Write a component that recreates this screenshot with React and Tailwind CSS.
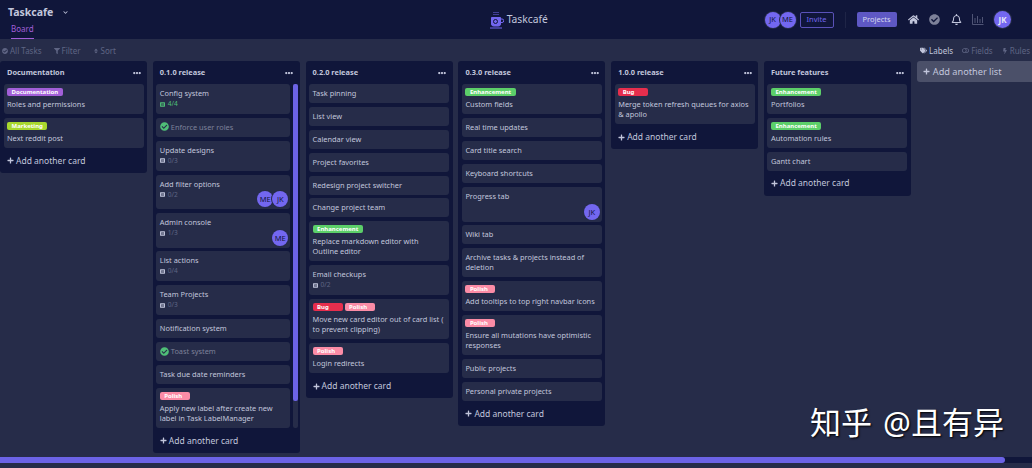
import React from 'react';
import { FaRegBell, FaBolt, FaCheckCircle, FaChevronDown, FaEllipsisH, FaFilter, FaHome, FaPlus, FaSort, FaTags, FaToggleOff, FaListAlt } from 'react-icons/fa';

const LABEL = {
  Documentation: 'bg-[#a25fd8]',
  Marketing: 'bg-[#a8d82e]',
  Enhancement: 'bg-[#5ccf69]',
  Bug: 'bg-[#e62e4d]',
  Polish: 'bg-[#fb8ca6]',
};

const LISTS = [
  {
    name: 'Documentation', cards: [
      { labels: ['Documentation'], title: 'Roles and permissions' },
      { labels: ['Marketing'], title: 'Next reddit post' },
    ],
  },
  {
    name: '0.1.0 release', scroll: true, cards: [
      { title: 'Config system', tasks: '4/4', done: true },
      { title: 'Enforce user roles', complete: true },
      { title: 'Update designs', tasks: '0/3' },
      { title: 'Add filter options', tasks: '0/2', members: ['ME', 'JK'] },
      { title: 'Admin console', tasks: '1/3', members: ['ME'] },
      { title: 'List actions', tasks: '0/4' },
      { title: 'Team Projects', tasks: '0/3' },
      { title: 'Notification system' },
      { title: 'Toast system', complete: true },
      { title: 'Task due date reminders' },
      { labels: ['Polish'], title: 'Apply new label after create new label in Task LabelManager' },
    ],
  },
  {
    name: '0.2.0 release', cards: [
      { title: 'Task pinning' },
      { title: 'List view' },
      { title: 'Calendar view' },
      { title: 'Project favorites' },
      { title: 'Redesign project switcher' },
      { title: 'Change project team' },
      { labels: ['Enhancement'], title: 'Replace markdown editor with Outline editor' },
      { title: 'Email checkups', tasks: '0/2' },
      { labels: ['Bug', 'Polish'], title: 'Move new card editor out of card list ( to prevent clipping)' },
      { labels: ['Polish'], title: 'Login redirects' },
    ],
  },
  {
    name: '0.3.0 release', cards: [
      { labels: ['Enhancement'], title: 'Custom fields' },
      { title: 'Real time updates' },
      { title: 'Card title search' },
      { title: 'Keyboard shortcuts' },
      { title: 'Progress tab', members: ['JK'], tall: true },
      { title: 'Wiki tab' },
      { title: 'Archive tasks & projects instead of deletion' },
      { labels: ['Polish'], title: 'Add tooltips to top right navbar icons' },
      { labels: ['Polish'], title: 'Ensure all mutations have optimistic responses' },
      { title: 'Public projects' },
      { title: 'Personal private projects' },
    ],
  },
  {
    name: '1.0.0 release', cards: [
      { labels: ['Bug'], title: 'Merge token refresh queues for axios & apollo' },
    ],
  },
  {
    name: 'Future features', cards: [
      { labels: ['Enhancement'], title: 'Portfolios' },
      { labels: ['Enhancement'], title: 'Automation rules' },
      { title: 'Gantt chart' },
    ],
  },
];

const Avatar = ({ text, className = 'w-[16px] h-[16px] text-[7.5px]' }) => (
  <div className={`rounded-full bg-[#7367f0] text-[#10163a] flex items-center justify-center ring-1 ring-[#262c49] ${className}`}>{text}</div>
);

const Card = ({ card }) => (
  <div className="relative bg-[#262c49] rounded-[3px] pl-[3.5px] pr-[4px] pt-[4px] pb-[5px] text-[7.4px] leading-[10px] text-[#c2c6dc]">
    {card.labels && (
      <div className="flex gap-[2px] mb-[3px]">
        {card.labels.map((l) => (
          <span key={l} className={`${LABEL[l]} h-[8px] min-w-[30px] rounded-[2px] px-[4.5px] text-[6px] leading-[8px] font-bold text-white`}>{l}</span>
        ))}
      </div>
    )}
    <div className={`flex items-center gap-[2px] ${card.complete ? 'text-[#7d8199]' : ''}`}>
      {card.complete && <FaCheckCircle className="text-[#4fbf77] text-[9px] shrink-0" />}
      <span>{card.title}</span>
    </div>
    {card.tasks && (
      <div className={`flex items-center gap-[3px] mt-[1px] h-[10px] text-[6.6px] ${card.done ? 'text-[#4fbf77]' : 'text-[#5f6584]'}`}>
        <FaListAlt className={`text-[5px] ${card.done ? 'text-[#4fbf77]' : 'text-[#c2c6dc]'}`} />
        {card.tasks}
      </div>
    )}
    {card.tall && <div className="h-[16px]" />}
    {card.members && card.tasks && <div className="h-[4.5px]" />}
    {card.members && (
      <div className="absolute right-[2px] bottom-[2px] flex -space-x-[1px]">
        {card.members.map((m) => <Avatar key={m} text={m} />)}
      </div>
    )}
  </div>
);

const List = ({ list }) => (
  <div className="w-[147px] shrink-0 self-start bg-[#10163a] rounded-[3px] px-[3.5px]">
    <div className="flex items-center justify-between h-[23px] pl-[3.5px] pr-[3px] text-[7.4px] font-bold text-[#c2c6dc]">
      <span>{list.name}</span>
      <FaEllipsisH className="text-[8px]" />
    </div>
    <div className="flex gap-[3px]">
      <div className="flex-1 min-w-0 flex flex-col gap-[3.9px]">
        {list.cards.map((c) => <Card key={c.title} card={c} />)}
      </div>
      {list.scroll && (
        <div className="w-[5px] shrink-0 -mr-[2px] bg-[#262c49] rounded-[2px]">
          <div className="h-[317px] bg-[#6c63e6] rounded-[2px]" />
        </div>
      )}
    </div>
    <div className="flex items-center gap-[2px] h-[25px] pl-[3.5px] pt-[1px] text-[8.5px] text-[#c2c6dc]">
      <FaPlus className="text-[7px]" />
      <span>Add another card</span>
    </div>
  </div>
);

const Tool = ({ icon, text, className = 'text-[#5f6584]' }) => (
  <div className={`flex items-center gap-[2px] text-[8px] ${className}`}>
    {icon}
    <span>{text}</span>
  </div>
);

export default function App() {
  return (
    <div className="relative w-[1032px] h-[468px] overflow-hidden flex flex-col bg-[#262c49] font-['Noto_Sans','Noto_Sans_CJK_SC',sans-serif]">
      {/* 헤더 */}
      <div className="h-[39px] shrink-0 bg-[#10163a] flex items-center justify-between pl-[8px] pr-[21px]">
        <div className="w-[300px] self-stretch">
          <div className="flex items-center gap-[10px] pt-[4px] text-[#c2c6dc]">
            <span className="text-[10.5px] font-bold leading-[16px]">Taskcafe</span>
            <FaChevronDown className="text-[5px]" />
          </div>
          <div className="ml-[3px] mt-[2px] w-fit h-[17px] border-b border-[#a25fd8] text-[8px] leading-[13px] text-[#a25fd8]">Board</div>
        </div>
        <div className="flex items-center gap-[3px] text-[#c2c6dc] text-[10.3px] -ml-[36px]">
          <svg width="15" height="18" viewBox="0 0 15 18" fill="none" stroke="#7367f0" strokeWidth="1">
            <path d="M5 1v4M7 1v4M9 1v4" strokeDasharray="1 1" />
            <path d="M2.5 6.5h9v6.5a2 2 0 0 1-2 2h-5a2 2 0 0 1-2-2z" fill="#7367f0" />
            <path d="M11.5 8h1.5a1.4 1.4 0 0 1 0 3.5h-1.5" />
            <circle cx="6.5" cy="10.5" r="2" stroke="#10163a" />
            <path d="M1 17h12" />
          </svg>
          <span>Taskcafé</span>
        </div>
        <div className="flex items-center">
          <div className="flex -space-x-[1px]">
            <Avatar text="JK" />
            <Avatar text="ME" />
          </div>
          <div className="ml-[4px] w-[34px] h-[16px] rounded-[2px] border border-[#5a52b8] text-[#7367f0] text-[7.5px] flex items-center justify-center">Invite</div>
          <div className="w-px h-[16px] mx-[11px] bg-[#1f2547]" />
          <div className="w-[40px] h-[15px] rounded-[2px] bg-[#5e58c4] text-[#d6d8ee] text-[7.5px] flex items-center justify-center">Projects</div>
          <FaHome className="ml-[11px] text-[#c2c6dc] text-[11px]" />
          <FaCheckCircle className="ml-[10.5px] text-[#7d8199] text-[11px]" />
          <FaRegBell className="ml-[11px] text-[#c2c6dc] text-[11px]" />
          <svg className="ml-[9.5px]" width="12" height="11" viewBox="0 0 12 11" fill="none" stroke="#5f6584" strokeWidth="0.8">
            <path d="M0.5 0v10.5h11M3 4v5M5.5 2v7M8 5v4M10.5 3v6" />
          </svg>
          <Avatar text="JK" className="ml-[10.5px] w-[17px] h-[17px] text-[8px] font-bold text-[#e5e6f5] ring-0" />
        </div>
      </div>

      {/* 툴바 */}
      <div className="h-[22px] pt-[1px] shrink-0 flex items-center justify-between pl-[2px] pr-[2px]">
        <div className="flex items-center gap-[12px]">
          <Tool icon={<FaCheckCircle className="text-[6px]" />} text="All Tasks" />
          <Tool icon={<FaFilter className="text-[6px]" />} text="Filter" />
          <Tool icon={<FaSort className="text-[6px]" />} text="Sort" />
        </div>
        <div className="flex items-center gap-[9px]">
          <Tool icon={<FaTags className="text-[7px]" />} text="Labels" className="text-[#c2c6dc]" />
          <Tool icon={<FaToggleOff className="text-[7px]" />} text="Fields" />
          <Tool icon={<FaBolt className="text-[6px]" />} text="Rules" />
        </div>
      </div>

      {/* 보드 */}
      <div className="flex-1 min-h-0 flex gap-[5.8px] overflow-hidden">
        {LISTS.map((l) => <List key={l.name} list={l} />)}
        <div className="shrink-0 w-[120px] h-[21px] bg-[#4b5069] rounded-[3px] flex items-center gap-[3px] pl-[6px] text-[9.2px] text-[#c2c6dc]">
          <FaPlus className="text-[7px]" />
          <span>Add another list</span>
        </div>
      </div>

      {/* 하단 스크롤바 */}
      <div className="shrink-0 h-[6px] mb-[5px] bg-[#10163a]">
        <div className="w-[1005px] h-full bg-[#6c63e6] rounded-r-[3px]" />
      </div>

      <div className="absolute left-[810px] top-[403px] text-[31px] leading-[38px] text-white whitespace-nowrap [word-spacing:3px] [text-shadow:1px_1px_2px_#000]">知乎 @且有异</div>
    </div>
  );
}
